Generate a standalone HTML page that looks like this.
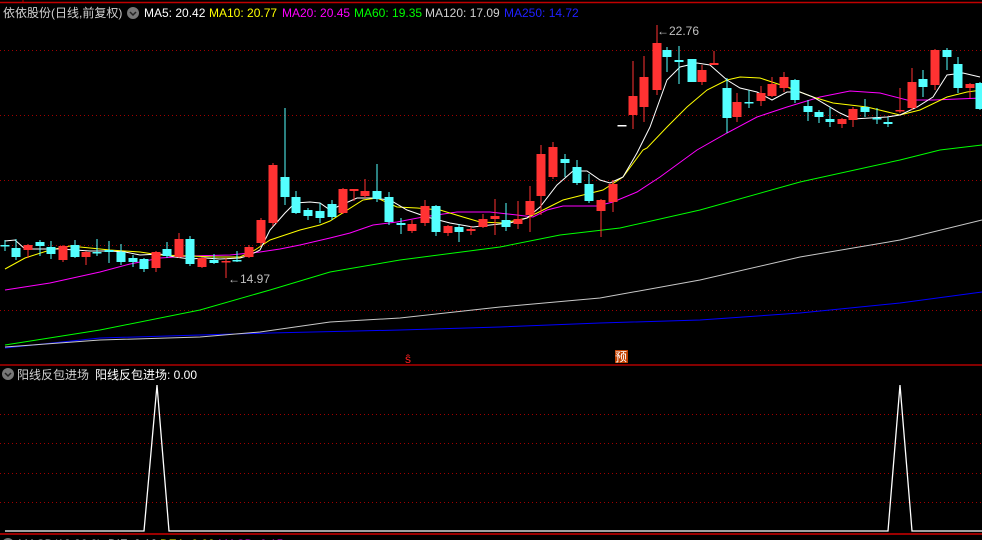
<!DOCTYPE html>
<html><head><meta charset="utf-8"><style>
html,body{margin:0;padding:0;background:#000;width:982px;height:540px;overflow:hidden}
svg{display:block}
text{font-family:"Liberation Sans","Noto Sans CJK SC",sans-serif;font-size:12px}
</style></head><body>
<svg id="s" width="982" height="540" viewBox="0 0 982 540" xmlns="http://www.w3.org/2000/svg">
<rect width="982" height="540" fill="#000"/>
<line x1="0" y1="2.5" x2="982" y2="2.5" stroke="#c00000" stroke-width="1.5"/>
<line x1="23" y1="0" x2="23" y2="3" stroke="#c00000"/>
<g stroke="#a00000" stroke-dasharray="1,3" stroke-width="1">
<line x1="0" y1="50.5" x2="982" y2="50.5"/><line x1="0" y1="115.5" x2="982" y2="115.5"/>
<line x1="0" y1="180.5" x2="982" y2="180.5"/><line x1="0" y1="245.5" x2="982" y2="245.5"/>
<line x1="0" y1="310.5" x2="982" y2="310.5"/>
<line x1="0" y1="414.5" x2="982" y2="414.5"/><line x1="0" y1="443.5" x2="982" y2="443.5"/>
<line x1="0" y1="473.5" x2="982" y2="473.5"/><line x1="0" y1="502.5" x2="982" y2="502.5"/>
</g>
<line x1="0" y1="365" x2="982" y2="365" stroke="#b00000" stroke-width="1.5"/>
<line x1="0" y1="534" x2="982" y2="534" stroke="#d00000" stroke-width="1.5"/>
<g fill="none" stroke-width="1">
<polyline stroke="#0000ff" points="5,348 100,338 200,335 270,333 400,330 500,327 600,323 700,320 800,313 900,303 982,292"/>
<polyline stroke="#c8c8c8" points="5,347 100,340 200,337 260,332 330,322 400,318 500,307 600,298 700,280 800,257 900,240 982,220"/>
<polyline stroke="#00ff00" points="5,345 100,330 200,310 270,290 330,272 400,260 500,247 560,235 620,228 700,210 800,182 900,160 940,150 982,145"/>
<polyline stroke="#ff00ff" points="5,290 50,283 100,272 130,264 160,258 190,256 230,255 260,252 280,249 300,245 330,238 350,233 373,225 397,222 423,217 457,212 490,212 517,215 533,217 547,210 563,206 597,206 613,202 637,192 660,177 697,150 727,133 757,117 787,107 820,97 850,91 880,93 907,100 933,100 982,98"/>
<polyline stroke="#ffff00" points="5,269 25,258 50,250 70,246 90,248 110,250 140,252 160,255 190,256 215,257 240,257 255,250 270,240 285,235 300,230 320,225 330,221 363,200 377,198 397,207 417,208 440,210 463,217 480,222 503,223 527,218 543,210 563,200 583,195 603,190 623,177 643,150 647,148 667,127 687,107 707,90 727,80 740,77 760,78 787,87 813,97 833,103 867,107 900,115 920,110 947,97 967,92 982,90"/>
<polyline stroke="#ffffff" points="5,241 15,240 25,249 40,249 60,249 90,251 110,251 125,252 140,255 160,254 175,257 190,259 205,258 220,259 240,258 250,255 260,250 270,230 285,213 295,203 310,202 320,203 330,210 357,198 373,198 390,200 407,210 427,217 450,223 473,227 490,225 510,223 527,218 540,207 557,185 573,171 587,171 600,180 610,183 623,177 637,153 650,127 667,80 680,67 697,63 710,65 727,80 740,88 757,92 772,100 787,92 800,92 813,97 840,113 853,119 887,117 900,115 917,107 933,97 947,75 963,73 980,77"/>
</g>
<g id="c"></g>
<text x="228" y="283" fill="#c0c0c0" font-size="11">←14.97</text>
<text x="657" y="35" fill="#c0c0c0" font-size="11">←22.76</text>
<text x="405" y="363" fill="#ff2020" font-size="11">ŝ</text>
<rect x="615" y="350" width="13" height="13" fill="#c04000"/>
<text x="615" y="361" fill="#fff" font-size="11">预</text>
<text x="3" y="17" fill="#d0d0d0">依依股份(日线,前复权)</text>
<circle cx="133" cy="13" r="6" fill="#777"/><path d="M130 12 L133 15 L136 12" stroke="#222" stroke-width="1.5" fill="none"/>
<text x="144" y="17" fill="#fff">MA5: 20.42</text>
<text x="209" y="17" fill="#ffff00">MA10: 20.77</text>
<text x="282" y="17" fill="#ff00ff">MA20: 20.45</text>
<text x="354" y="17" fill="#00ff00">MA60: 19.35</text>
<text x="425" y="17" fill="#d0d0d0">MA120: 17.09</text>
<text x="504" y="17" fill="#2020ff">MA250: 14.72</text>
<circle cx="8" cy="374" r="6" fill="#777"/><path d="M5 373 L8 376 L11 373" stroke="#222" stroke-width="1.5" fill="none"/>
<text x="17" y="379" fill="#d0d0d0">阳线反包进场</text>
<text x="95" y="379" fill="#fff">阳线反包进场: 0.00</text>
<polyline fill="none" stroke="#fff" stroke-width="1.3" points="5,531 144,531 157,385 169,531 888,531 900,385 912,531 982,531"/>
<circle cx="8" cy="544" r="6" fill="#777"/>
<text x="18" y="548" fill="#d0d0d0">MACD(12,26,9)</text>
<text x="108" y="548" fill="#fff">DIF: 0.10</text>
<text x="160" y="548" fill="#ffff00">DEA: 0.00</text>
<text x="218" y="548" fill="#ff00ff">MACD: 0.15</text>
</svg>
<script>
var d=[[5,245,246,240,251,1],[16,248,257,239,260,1],[28,245,250,244,258,0],[40,242,246,240,256,1],[51,247,254,241,259,1],[63,246,260,245,262,0],[75,245,257,240,258,1],[86,252,257,251,265,0],[97,252,253,239,256,1],[109,250,252,241,263,1],[121,252,262,244,265,1],[133,258,262,255,267,1],[144,259,269,258,272,1],[156,252,268,251,272,0],[167,249,256,242,258,1],[179,239,257,233,258,0],[190,239,264,236,266,1],[202,258,267,257,268,0],[214,260,263,254,264,1],[226,261,262,258,278,0],[237,260,261,251,262,1],[249,247,257,245,258,0],[261,220,243,218,246,0],[273,165,223,163,226,0],[285,177,197,108,205,1],[296,197,213,191,214,1],[308,210,216,208,220,1],[320,211,218,203,223,1],[332,204,217,200,220,1],[343,189,213,188,214,0],[354,189,191,189,201,0],[365,191,196,179,198,0],[377,191,199,164,202,1],[389,197,222,192,225,1],[401,223,225,218,234,1],[412,224,231,220,233,0],[425,206,223,200,226,0],[436,206,232,205,236,1],[448,226,233,225,236,0],[459,227,232,224,242,1],[471,229,231,226,235,0],[483,219,227,214,228,0],[495,216,219,199,235,0],[506,220,227,203,231,1],[518,219,224,201,229,0],[530,201,215,186,232,0],[541,154,196,145,215,0],[553,147,177,142,179,0],[565,159,163,154,177,1],[577,167,183,160,185,1],[589,184,201,174,203,1],[601,200,211,199,237,0],[613,184,202,180,212,0],[622,125,126,125,126,2],[633,96,115,61,129,0],[644,77,107,56,122,0],[657,43,90,25,95,0],[667,50,57,47,72,1],[679,60,62,46,84,1],[692,59,82,59,82,1],[702,70,82,65,85,0],[714,63,65,51,65,0],[727,88,118,78,133,1],[737,102,117,93,122,0],[749,102,103,90,108,1],[761,93,101,86,106,0],[772,84,96,77,97,0],[784,77,88,72,92,0],[795,80,100,79,103,1],[808,106,112,100,121,1],[819,112,117,110,123,1],[830,119,122,107,127,1],[842,119,124,118,128,0],[853,109,120,107,127,0],[865,107,112,99,117,1],[877,118,119,108,124,1],[888,122,124,117,127,1],[900,110,111,88,113,0],[912,82,108,68,110,0],[923,79,87,70,97,1],[935,50,85,49,90,0],[947,50,57,48,70,1],[958,64,88,57,93,1],[970,84,88,83,98,0],[980,83,109,82,110,1]];
var g=document.getElementById('c'),h='';
d.forEach(function(c){var col=c[5]==1?'#54ffff':(c[5]==2?'#ffffff':'#ff3232');
h+='<line x1="'+c[0]+'" x2="'+c[0]+'" y1="'+c[3]+'" y2="'+c[4]+'" stroke="'+col+'" stroke-width="1"/>';
h+='<rect x="'+(c[0]-4.5)+'" y="'+c[1]+'" width="9" height="'+Math.max(1.5,c[2]-c[1])+'" fill="'+col+'"/>';});
g.innerHTML=h;
</script>
</body></html>
